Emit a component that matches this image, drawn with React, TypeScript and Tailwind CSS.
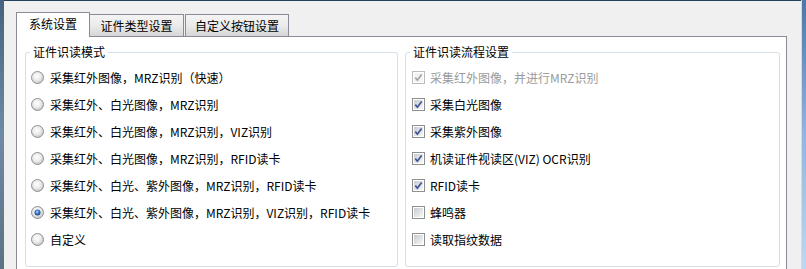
import React from 'react'

const modes = [
  '采集红外图像，MRZ识别（快速）',
  '采集红外、白光图像，MRZ识别',
  '采集红外、白光图像，MRZ识别，VIZ识别',
  '采集红外、白光图像，MRZ识别，RFID读卡',
  '采集红外、白光、紫外图像，MRZ识别，RFID读卡',
  '采集红外、白光、紫外图像，MRZ识别，VIZ识别，RFID读卡',
  '自定义',
]

const steps = [
  { label: '采集红外图像，并进行MRZ识别', checked: true, disabled: true },
  { label: '采集白光图像', checked: true },
  { label: '采集紫外图像', checked: true },
  { label: '机读证件视读区(VIZ) OCR识别', checked: true },
  { label: 'RFID读卡', checked: true },
  { label: '蜂鸣器', checked: false },
  { label: '读取指纹数据', checked: false },
]

function Radio({ on }: { on: boolean }) {
  return (
    <svg width="13" height="13" viewBox="0 0 13 13" className="shrink-0">
      <defs>
        <radialGradient id="rb" cx="45%" cy="40%" r="60%">
          <stop offset="0%" stopColor="#ffffff" />
          <stop offset="55%" stopColor="#ebebeb" />
          <stop offset="100%" stopColor="#c4c4c4" />
        </radialGradient>
        <radialGradient id="rd" cx="45%" cy="40%" r="60%">
          <stop offset="0%" stopColor="#b9e0fb" />
          <stop offset="50%" stopColor="#3a7ccc" />
          <stop offset="100%" stopColor="#143c86" />
        </radialGradient>
      </defs>
      <circle cx="6.5" cy="6.5" r="6" fill="url(#rb)" stroke="#8f9193" />
      {on && <circle cx="6.5" cy="6.5" r="3" fill="url(#rd)" />}
    </svg>
  )
}

function Check({ on, disabled }: { on: boolean; disabled?: boolean }) {
  return (
    <svg width="13" height="13" viewBox="0 0 13 13" className="shrink-0">
      <defs>
        <linearGradient id="cb" x1="0" y1="0" x2="1" y2="1">
          <stop offset="0%" stopColor="#c7cbd1" />
          <stop offset="100%" stopColor="#f7f7f7" />
        </linearGradient>
      </defs>
      <rect x="0.5" y="0.5" width="12" height="12" fill="#ffffff" stroke={disabled ? '#bcbcbc' : '#8e8f8f'} />
      <rect x="2" y="2" width="9" height="9" fill={disabled ? '#f4f4f4' : 'url(#cb)'} />
      {on && (
        <path
          d="M3.3 6.6 L5.4 9.2 L9.6 3.4"
          fill="none"
          stroke={disabled ? '#a4a4a4' : '#3e5592'}
          strokeWidth="1.7"
        />
      )}
    </svg>
  )
}

export default function App() {
  return (
    <div className="flex h-[269px] w-[806px] overflow-hidden bg-[#f0f0f0] font-['Noto_Sans_CJK_SC',sans-serif] text-[12px] text-black">
      <div className="w-[4px] shrink-0 bg-gradient-to-b from-[#46627e] via-[#6f8aa3] to-[#5b7186]" />

      <div className="w-[797px] shrink-0 border-t border-[#24415e] pl-[12px] pt-[11px]">
        <div className="relative z-10 flex items-end">
          <div className="-mb-px flex h-[25px] w-[74px] items-center justify-center border border-b-0 border-[#898c95] bg-white pb-[2px]">
            系统设置
          </div>
          <div className="flex h-[22px] w-[94px] items-center justify-center border border-b-0 border-l-0 border-[#898c95] bg-gradient-to-b from-[#f4f4f4] via-[#ebebeb] to-[#d6d6d6]">
            证件类型设置
          </div>
          <div className="ml-px flex h-[22px] w-[104px] items-center justify-center border border-b-0 border-[#898c95] bg-gradient-to-b from-[#f4f4f4] via-[#ebebeb] to-[#d6d6d6]">
            自定义按钮设置
          </div>
        </div>

        <div className="flex h-[300px] w-[771px] items-start gap-[7px] border border-[#898c95] bg-white pl-[8px] pt-[7px]">
          <fieldset className="w-[373px] rounded-[3px] border border-[#d5dfe5] pb-[13px] pl-[5px]">
            <legend className="-ml-[1px] px-[3px] leading-[16px]">证件识读模式</legend>
            <div className="pt-[4px]">
              {modes.map((m, i) => (
                <div key={m} className="flex h-[27px] items-center gap-[6px]">
                  <Radio on={i === 5} />
                  <span>{m}</span>
                </div>
              ))}
            </div>
          </fieldset>

          <fieldset className="w-[375px] rounded-[3px] border border-[#d5dfe5] pb-[13px] pl-[6px]">
            <legend className="-ml-[2px] px-[3px] leading-[16px]">证件识读流程设置</legend>
            <div className="pt-[4px]">
              {steps.map((s) => (
                <div key={s.label} className="flex h-[27px] items-center gap-[5px]">
                  <Check on={s.checked} disabled={s.disabled} />
                  <span className={s.disabled ? 'text-[#9b9b9b]' : ''}>{s.label}</span>
                </div>
              ))}
            </div>
          </fieldset>
        </div>
      </div>

      <div className="w-px shrink-0 bg-[#dadada]" />
      <div className="w-[4px] shrink-0 bg-gradient-to-b from-[#4c78a6] via-[#8fb6de] to-[#bcd8f4]" />
    </div>
  )
}
